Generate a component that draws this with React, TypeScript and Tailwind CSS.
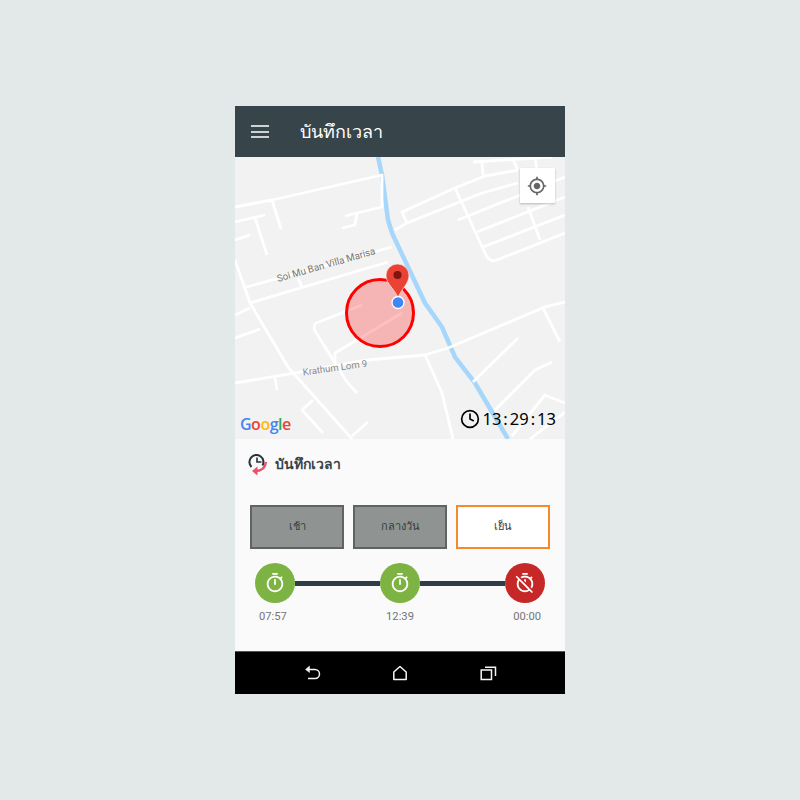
import { Clock } from 'lucide-react';

const thai = 'font-["Roboto","Noto_Sans","Noto_Sans_CJK_SC",sans-serif]';

const roads = [
	'M235 207 L272 200 L382 175 L382 207 L345 216',
	'M357 213 L355 225 L342 228',
	'M272 200 L281 229',
	'M235 222 L265 215',
	'M255 218 L267 255',
	'M235 240 L250 235',
	'M408 210 L402 212 L407 223 L482 193 L518 183',
	'M402 212 L455 188 L485 176 L518 170',
	'M455 188 L485 253 Q489 263 497 260 L565 233',
	'M458 220 L565 177',
	'M477 232 L565 197',
	'M483 247 L565 215',
	'M528 207 L540 240',
	'M473 162 L552 157',
	'M482 163 L483 175',
	'M513 160 L518 170',
	'M535 158 L537 170',
	'M395 230 L407 223',
	'M235 260 L250 303 L288 367 L352 439',
	'M243 288 L392 247',
	'M250 303 L388 262',
	'M298 278 L302 287',
	'M235 315 L250 308',
	'M235 338 L260 329',
	'M235 383 L295 373 L368 360 L425 355 L448 348 L545 307 L565 302',
	'M275 378 L277 390',
	'M425 355 L442 393 L453 439',
	'M543 308 L560 342',
	'M473 382 L518 338',
	'M495 410 L535 370 L552 362',
	'M362 305 L316 323 Q313 326 315 331 L347 382 L357 393',
	'M402 313 L335 353 L335 363',
	'M313 400 L302 410 L323 433',
	'M352 436 L368 422',
	'M512 436 L545 395 L552 398 L565 403',
	'M530 439 L565 412',
];

function MapCanvas() {
	return (
		<div className="relative h-[282px] overflow-hidden bg-[#f2f2f2]">
			<svg viewBox="235 157 330 282" className="absolute inset-0 h-full w-full">
				<path
					d="M378 157 L382 175 L388 220 L392 233 L408 267 L425 303 L442 327 L455 357 L475 383 L508 439"
					fill="none"
					stroke="#a6d6fa"
					strokeWidth="4.5"
				/>
				{roads.map((d) => (
					<path key={d} d={d} fill="none" stroke="#fff" strokeWidth="2.8" strokeLinejoin="round" />
				))}
				<text
					x="326"
					y="268"
					textAnchor="middle"
					transform="rotate(-16 326 265)"
					fill="#7a756c"
					fontSize="9.7"
					fontFamily="Roboto, sans-serif">
					Soi Mu Ban Villa Marisa
				</text>
				<text
					x="335"
					y="371"
					textAnchor="middle"
					transform="rotate(-8 335 368)"
					fill="#8a8a8a"
					fontSize="9.5"
					fontFamily="Roboto, sans-serif">
					Krathum Lom 9
				</text>
				<circle cx="380" cy="313" r="33.5" fill="#ff0000" fillOpacity="0.25" stroke="#ff0000" strokeWidth="3" />
				<path
					d="M398 298 C395 289 386 284 386 275.5 A11.5 11.5 0 0 1 409 275.5 C409 284 401 289 398 298 Z"
					fill="#ea4335"
					stroke="#fff"
					strokeWidth="0.6"
				/>
				<circle cx="397.5" cy="275" r="4" fill="#7f1410" />
				<circle cx="398" cy="302.5" r="6" fill="#4285f4" stroke="#fff" strokeWidth="1.3" />
			</svg>

			<button className="absolute left-[284.5px] top-[11px] flex h-[35px] w-[35px] items-center justify-center bg-white shadow-[0_1px_2px_rgba(0,0,0,0.25)]">
				<svg viewBox="0 0 24 24" className="h-[20px] w-[20px]" fill="#666">
					<path d="M12 8c-2.21 0-4 1.79-4 4s1.79 4 4 4 4-1.79 4-4-1.79-4-4-4zm8.94 3c-.46-4.17-3.77-7.48-7.94-7.94V1h-2v2.06C6.83 3.52 3.52 6.83 3.06 11H1v2h2.06c.46 4.17 3.77 7.48 7.94 7.94V23h2v-2.06c4.17-.46 7.48-3.77 7.94-7.94H23v-2h-2.06zM12 19c-3.87 0-7-3.13-7-7s3.13-7 7-7 7 3.13 7 7-3.13 7-7 7z" />
				</svg>
			</button>

			<div className='absolute bottom-[6px] left-[5px] font-["Open_Sans",sans-serif] text-[16px] font-semibold leading-[18px] tracking-[-0.5px]'>
				<span className="text-[#4285f4]">G</span>
				<span className="text-[#ea4335]">o</span>
				<span className="text-[#fbbc05]">o</span>
				<span className="text-[#4285f4]">g</span>
				<span className="text-[#34a853]">l</span>
				<span className="text-[#ea4335]">e</span>
			</div>

			<div className="absolute bottom-[10px] right-[9px] flex items-center text-black">
				<Clock size={20} strokeWidth={2} />
				<span className='ml-[2px] font-["Noto_Sans",sans-serif] text-[16.5px] leading-[20px]'>
					13<span className="mx-[2px]">:</span>29<span className="mx-[2px]">:</span>13
				</span>
			</div>
		</div>
	);
}

function StopButton({ off }: { off?: boolean }) {
	return (
		<div className={`flex h-[40px] w-[40px] shrink-0 items-center justify-center rounded-full ${off ? 'bg-[#c62828]' : 'bg-[#7cb342]'}`}>
			<svg viewBox="0 0 24 24" className="h-[22px] w-[22px]" fill="#fff">
				{off ? (
					<path d="M19.04 4.55l-1.42 1.42C16.07 4.74 14.12 4 12 4c-1.83 0-3.53.55-4.95 1.48l1.46 1.46C9.53 6.35 10.73 6 12 6c3.87 0 7 3.13 7 7 0 1.27-.35 2.47-.94 3.49l1.45 1.45C20.45 16.53 21 14.83 21 13c0-2.12-.74-4.07-1.97-5.61l1.42-1.42-1.41-1.42zM15 1H9v2h6V1zm-4 8.44l2 2V8h-2v1.44zM3.02 4L1.75 5.27 4.5 8.03C3.55 9.45 3 11.16 3 13c0 4.97 4.02 9 9 9 1.84 0 3.55-.55 4.98-1.5l2.5 2.5 1.27-1.27-7.71-7.71L3.02 4zM12 20c-3.87 0-7-3.13-7-7 0-1.28.35-2.48.95-3.52l9.56 9.56c-1.03.61-2.23.96-3.51.96z" />
				) : (
					<path d="M15 1H9v2h6V1zm-4 13h2V8h-2v6zm8.03-6.61l1.42-1.42c-.43-.51-.9-.99-1.41-1.41l-1.42 1.42C16.07 4.74 14.12 4 12 4c-4.97 0-9 4.03-9 9s4.02 9 9 9 9-4.03 9-9c0-2.12-.74-4.07-1.97-5.61zM12 20c-3.87 0-7-3.13-7-7s3.13-7 7-7 7 3.13 7 7-3.13 7-7 7z" />
				)}
			</svg>
		</div>
	);
}

export default function App() {
	return (
		<div className={`flex h-[800px] w-[800px] items-center justify-center bg-[#e3e9e9] ${thai}`}>
			<div className="flex h-[588px] w-[330px] flex-col">
				<header className="flex h-[51px] shrink-0 items-center bg-[#37454b] pl-[16px] text-white">
					<div className="flex w-[18px] flex-col gap-[3.5px]">
						<span className="h-[2px] bg-[#ced4d6]" />
						<span className="h-[2px] bg-[#ced4d6]" />
						<span className="h-[2px] bg-[#ced4d6]" />
					</div>
					<h1 className="ml-[31px] text-[18px] font-normal">บันทึกเวลา</h1>
				</header>

				<MapCanvas />

				<main className="flex-1 bg-[#fafafa]">
					<div className="flex items-center pl-[13px] pt-[13px]">
						<svg viewBox="0 0 20 24" className="h-[24px] w-[20px]" fill="none">
							<path d="M3.5 15 A7 7 0 1 1 14.5 13.5" stroke="#263238" strokeWidth="2" />
							<path d="M9 5.5 V10 H13.5" stroke="#263238" strokeWidth="1.6" />
							<path d="M17.8 10 C17.5 16 13 19 7 19" stroke="#e8526b" strokeWidth="2.4" />
							<path d="M9.5 14.5 L4 19 L9.5 23.5 Z" fill="#e8526b" />
						</svg>
						<h2 className="ml-[7px] text-[14px] font-bold text-[#37454b]">บันทึกเวลา</h2>
					</div>

					<div className="mt-[29px] flex gap-[9px] px-[15px] text-[11px] text-[#2f3e46]">
						<button className="h-[44px] w-[94px] border-2 border-[#5f6362] bg-[#8f9492]">เช้า</button>
						<button className="h-[44px] w-[94px] border-2 border-[#5f6362] bg-[#8f9492]">กลางวัน</button>
						<button className="h-[44px] w-[94px] border-2 border-[#f58a2c] bg-white">เย็น</button>
					</div>

					<div className="mt-[14px] flex items-center px-[20px]">
						<StopButton />
						<div className="h-[5px] flex-1 bg-[#2f3e46]" />
						<StopButton />
						<div className="h-[5px] flex-1 bg-[#2f3e46]" />
						<StopButton off />
					</div>

					<div className="mt-[6px] flex justify-between px-[24px] text-[11.2px] leading-[16px] text-[#757575]">
						<span>07:57</span>
						<span>12:39</span>
						<span>00:00</span>
					</div>
				</main>

				<nav className="flex h-[43px] shrink-0 items-center border-t border-[#555] bg-black pl-[69px]">
					<svg viewBox="0 0 18 16" className="h-[16px] w-[18px]" fill="none" stroke="#f5f5f5" strokeWidth="1.5">
						<path d="M3 4.5 H11 A4.5 4.5 0 0 1 11 13.5 H4" />
						<path d="M5.5 1 L1.5 4.5 L5.5 7.5 Z" fill="#f5f5f5" strokeWidth="0.5" />
					</svg>
					<svg viewBox="0 0 16 16" className="ml-[70px] h-[16px] w-[16px]" fill="none" stroke="#f5f5f5" strokeWidth="1.5">
						<path d="M1.8 14.5 V7 L8 1.5 L14.2 7 V14.5 Z" strokeLinejoin="round" />
					</svg>
					<svg viewBox="0 0 17 16" className="ml-[72px] h-[16px] w-[17px]" fill="none" stroke="#f5f5f5" strokeWidth="1.5">
						<path d="M1.2 5 H11.5 V14.5 H1.2 Z" />
						<path d="M5 2.2 H15.5 V11" />
					</svg>
				</nav>
			</div>
		</div>
	);
}
